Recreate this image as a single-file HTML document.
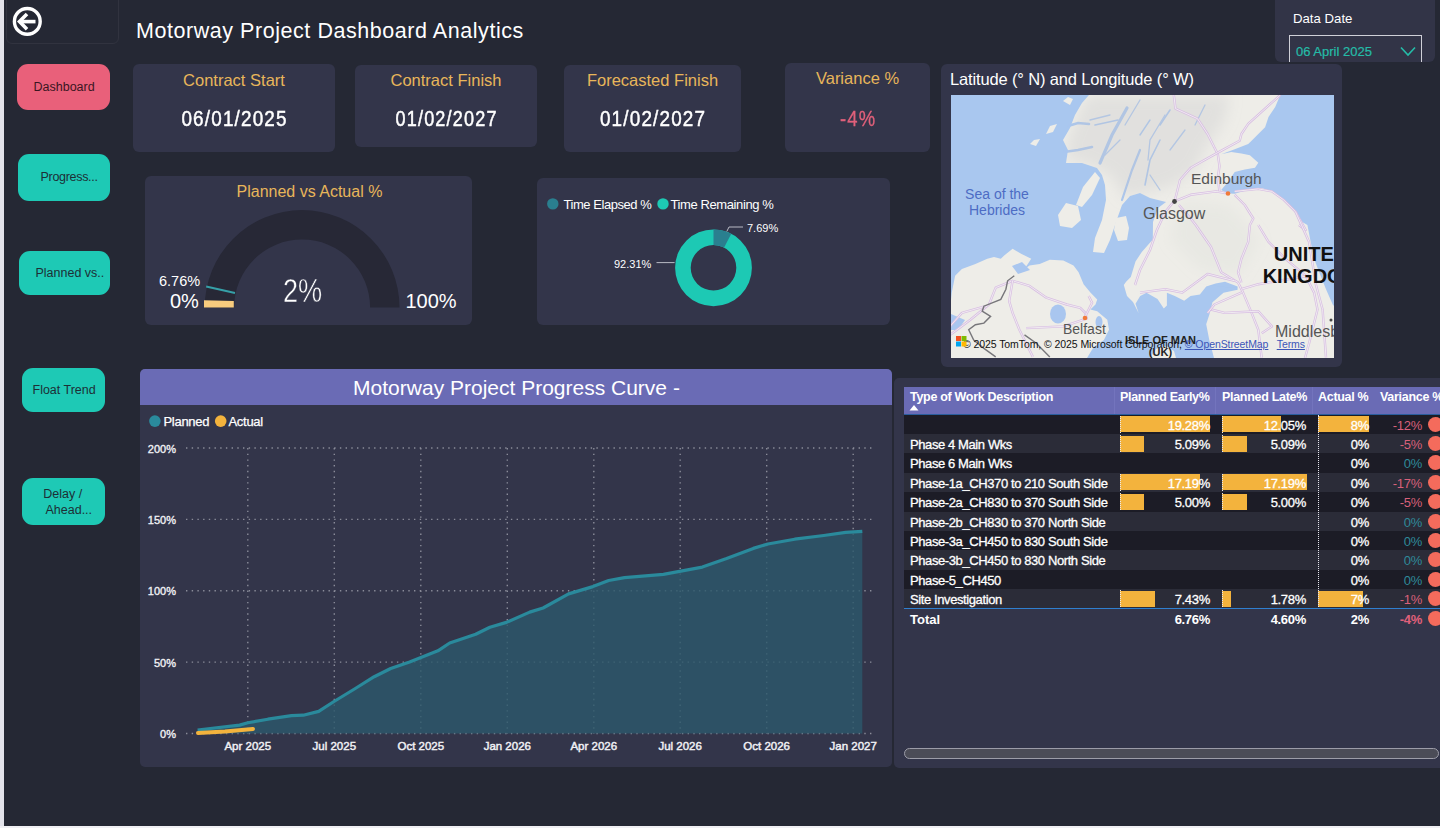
<!DOCTYPE html>
<html><head><meta charset="utf-8">
<style>
*{margin:0;padding:0;box-sizing:border-box}
html,body{width:1440px;height:828px;overflow:hidden;background:#e6e6ec;font-family:"Liberation Sans",sans-serif}
#page{position:absolute;left:0;top:0;width:1440px;height:828px;background:#252834;overflow:hidden}
#ls{position:absolute;left:0;top:0;width:4px;height:828px;background:#e3e3ea}
#bs{position:absolute;left:0;top:826px;width:1440px;height:2px;background:#f0f0f4}
.a{position:absolute}
.card{position:absolute;background:#33354a;border-radius:6px}
.t{position:absolute;white-space:nowrap;line-height:1}
.btn{position:absolute;border-radius:11px;color:#1d2b33;font-size:12.5px;display:flex;align-items:center;justify-content:center;text-align:center;line-height:16px}
.kt{color:#e8b65a;font-size:16.5px;text-align:center;left:0;right:0}
.kv{color:#fff;font-size:22.5px;letter-spacing:1.4px;text-indent:1.4px;text-align:center;left:0;right:0;transform:scaleX(.84);-webkit-text-stroke:0.5px #fff}
</style></head><body>
<div id="page">
<!-- back button box -->
<div class="a" style="left:6px;top:-8px;width:113px;height:52px;border:1px solid #31333f;border-radius:6px;background:#252834"></div>
<svg class="a" style="left:0;top:0" width="60" height="50">
<circle cx="27.3" cy="21.4" r="12.9" fill="none" stroke="#fff" stroke-width="3.4"/>
<path d="M19.5 21.6 H35.5" stroke="#fff" stroke-width="3.6" fill="none"/>
<path d="M27 14 L19.5 21.6 L27 29.2" fill="none" stroke="#fff" stroke-width="3.6" stroke-linejoin="miter"/>
</svg>
<div class="t" style="left:136px;top:21px;font-size:21.5px;letter-spacing:0.55px;color:#fff">Motorway Project Dashboard Analytics</div>

<!-- data date -->
<div class="card" style="left:1275px;top:-10px;width:160px;height:72px;background:#323447"></div>
<div class="t" style="left:1293px;top:12px;font-size:13.2px;color:#fff">Data Date</div>
<div class="a" style="left:1289px;top:35px;width:133px;height:27px;border:1.5px solid #d0d0d8;border-bottom:none"></div>
<div class="t" style="left:1296px;top:44.5px;font-size:13px;color:#25bca8;-webkit-text-stroke:0.2px #25bca8">06 April 2025</div>
<svg class="a" style="left:1400px;top:46px" width="17" height="11"><path d="M1 1.5 L8 9 L15 1.5" fill="none" stroke="#25bca8" stroke-width="1.6"/></svg>

<!-- nav buttons -->
<div class="btn" style="left:17px;top:64px;width:93px;height:46px;background:#e9607a"></div>
<div class="t" style="left:33.5px;top:80.7px;font-size:12.5px;color:#3a1622">Dashboard</div>
<div class="btn" style="left:18px;top:154px;width:92px;height:47px;background:#1ec9b5"></div>
<div class="t" style="left:40.5px;top:171.3px;font-size:12.5px;letter-spacing:-0.3px;color:#1d2f35">Progress...</div>
<div class="btn" style="left:19px;top:251px;width:91px;height:44px;background:#1ec9b5"></div>
<div class="t" style="left:35.5px;top:266.8px;font-size:12.5px;color:#1d2f35">Planned vs..</div>
<div class="btn" style="left:21.5px;top:368px;width:83px;height:44px;background:#1ec9b5"></div>
<div class="t" style="left:32.5px;top:384.2px;font-size:12.5px;color:#1d2f35">Float Trend</div>
<div class="btn" style="left:21.5px;top:478px;width:83px;height:47px;background:#1ec9b5"></div>
<div class="t" style="left:43.3px;top:487.6px;font-size:12.5px;color:#1d2f35">Delay /</div>
<div class="t" style="left:45.5px;top:503.7px;font-size:12.5px;color:#1d2f35">Ahead...</div>

<!-- KPI cards -->
<div class="card" style="left:133px;top:64px;width:202px;height:88px">
 <div class="t kt" style="top:8.2px">Contract Start</div>
 <div class="t kv" style="top:44.3px">06/01/2025</div>
</div>
<div class="card" style="left:355px;top:65px;width:182px;height:82px">
 <div class="t kt" style="top:6.9px">Contract Finish</div>
 <div class="t kv" style="top:43.7px;font-size:21.5px">01/02/2027</div>
</div>
<div class="card" style="left:564px;top:65px;width:177px;height:87px">
 <div class="t kt" style="top:7px">Forecasted Finish</div>
 <div class="t kv" style="top:43px">01/02/2027</div>
</div>
<div class="card" style="left:785px;top:63px;width:145px;height:89px">
 <div class="t kt" style="top:7px">Variance %</div>
 <div class="t kv" style="top:45px;color:#e0607a;font-size:22px;-webkit-text-stroke:0.3px #e0607a">-4%</div>
</div>

<!-- MAP -->
<div class="card" style="left:941px;top:64px;width:401px;height:303px;border-radius:6px"></div>
<div class="t" style="left:950px;top:71px;font-size:16.5px;letter-spacing:-0.15px;color:#fff">Latitude (° N) and Longitude (° W)</div>
<div id="map" class="a" style="left:951px;top:95px;width:383px;height:263px;background:#a9c7ef;overflow:hidden"><svg width="383" height="263" viewBox="951 95 383 263" style="position:absolute;left:0;top:0">
<defs><clipPath id="landclip"><path d="M1089.0,95.0 L1280.3,95.0 L1275.2,106.9 L1268.5,117.0 L1265.1,127.2 L1258.3,134.0 L1251.6,140.7 L1248.2,144.1 L1234.7,149.2 L1221.2,154.2 L1231.3,152.0 L1241.4,153.6 L1249.9,155.2 L1258.3,162.7 L1255.0,167.8 L1244.8,169.5 L1234.7,172.0 L1227.9,182.0 L1221.2,190.0 L1227.9,193.5 L1234.7,193.8 L1248.2,189.7 L1261.7,188.1 L1271.9,191.4 L1282.0,198.2 L1292.2,208.3 L1302.3,221.9 L1307.4,225.0 L1310.7,241.9 L1314.1,258.8 L1319.2,272.3 L1326.0,289.2 L1332.7,304.5 L1334.0,306.0 L1334.0,358.0 L1214.0,358.0 L1209.3,339.9 L1206.2,324.2 L1209.3,314.8 L1212.5,302.2 L1223.5,292.8 L1237.6,289.7 L1237.6,286.5 L1225.0,281.8 L1215.6,283.4 L1206.2,286.5 L1199.9,294.4 L1190.5,296.0 L1184.2,300.7 L1174.8,296.0 L1166.9,292.8 L1166.9,305.4 L1163.8,308.5 L1157.5,299.1 L1146.5,292.8 L1140.2,296.0 L1135.5,303.8 L1138.7,313.2 L1133.0,302.0 L1127.0,296.0 L1123.8,285.0 L1126.1,281.8 L1130.8,277.1 L1135.5,261.4 L1141.8,252.0 L1152.8,239.4 L1153.0,222.0 L1158.0,208.0 L1166.0,202.0 L1150.0,198.0 L1140.0,193.0 L1130.0,196.0 L1122.0,205.0 L1116.0,222.0 L1110.0,240.0 L1104.0,253.0 L1093.0,252.0 L1095.0,238.0 L1102.0,220.0 L1106.0,200.0 L1105.0,185.0 L1102.0,175.0 L1097.0,168.0 L1082.0,163.0 L1066.0,163.0 L1068.0,150.0 L1063.0,140.0 L1070.0,128.0 L1075.0,115.0 L1082.0,103.0 Z"/></clipPath></defs><path d="M1089.0,95.0 L1280.3,95.0 L1275.2,106.9 L1268.5,117.0 L1265.1,127.2 L1258.3,134.0 L1251.6,140.7 L1248.2,144.1 L1234.7,149.2 L1221.2,154.2 L1231.3,152.0 L1241.4,153.6 L1249.9,155.2 L1258.3,162.7 L1255.0,167.8 L1244.8,169.5 L1234.7,172.0 L1227.9,182.0 L1221.2,190.0 L1227.9,193.5 L1234.7,193.8 L1248.2,189.7 L1261.7,188.1 L1271.9,191.4 L1282.0,198.2 L1292.2,208.3 L1302.3,221.9 L1307.4,225.0 L1310.7,241.9 L1314.1,258.8 L1319.2,272.3 L1326.0,289.2 L1332.7,304.5 L1334.0,306.0 L1334.0,358.0 L1214.0,358.0 L1209.3,339.9 L1206.2,324.2 L1209.3,314.8 L1212.5,302.2 L1223.5,292.8 L1237.6,289.7 L1237.6,286.5 L1225.0,281.8 L1215.6,283.4 L1206.2,286.5 L1199.9,294.4 L1190.5,296.0 L1184.2,300.7 L1174.8,296.0 L1166.9,292.8 L1166.9,305.4 L1163.8,308.5 L1157.5,299.1 L1146.5,292.8 L1140.2,296.0 L1135.5,303.8 L1138.7,313.2 L1133.0,302.0 L1127.0,296.0 L1123.8,285.0 L1126.1,281.8 L1130.8,277.1 L1135.5,261.4 L1141.8,252.0 L1152.8,239.4 L1153.0,222.0 L1158.0,208.0 L1166.0,202.0 L1150.0,198.0 L1140.0,193.0 L1130.0,196.0 L1122.0,205.0 L1116.0,222.0 L1110.0,240.0 L1104.0,253.0 L1093.0,252.0 L1095.0,238.0 L1102.0,220.0 L1106.0,200.0 L1105.0,185.0 L1102.0,175.0 L1097.0,168.0 L1082.0,163.0 L1066.0,163.0 L1068.0,150.0 L1063.0,140.0 L1070.0,128.0 L1075.0,115.0 L1082.0,103.0 Z" fill="#eeede8"/>
<path d="M1083.0,187.0 L1095.0,172.0 L1100.0,178.0 L1092.0,195.0 L1082.0,207.0 L1076.0,205.0 Z" fill="#eeede8"/>
<path d="M1058.0,215.0 L1066.0,203.0 L1078.0,206.0 L1081.0,220.0 L1072.0,228.0 L1060.0,226.0 Z" fill="#eeede8"/>
<path d="M1116.0,218.0 L1126.0,216.0 L1129.0,228.0 L1127.0,240.0 L1118.0,241.0 L1114.0,230.0 Z" fill="#eeede8"/>
<path d="M951.0,300.0 L951.8,292.6 L955.1,275.7 L961.9,269.0 L975.4,263.9 L987.3,258.8 L994.0,257.1 L1000.8,258.8 L1004.2,255.4 L1012.6,248.7 L1021.1,253.7 L1031.2,258.8 L1027.8,263.9 L1024.5,269.0 L1029.5,265.6 L1039.7,263.9 L1049.8,259.7 L1063.3,260.5 L1073.5,265.6 L1078.6,272.3 L1083.6,284.2 L1090.4,292.6 L1097.2,299.4 L1095.5,304.5 L1090.4,309.5 L1097.2,311.2 L1107.3,319.7 L1109.0,329.8 L1103.9,340.0 L1093.8,346.7 L1087.0,358.0 L951.0,358.0 Z" fill="#eeede8"/>
<path d="M1150.0,358.0 L1156.0,349.0 L1166.0,346.0 L1174.0,351.0 L1176.0,358.0 Z" fill="#eeede8"/>
<path d="M1046.0,134.0 L1050.0,126.0 L1057.0,124.0 L1053.0,132.0 Z" fill="#eeede8"/>
<path d="M1030.0,144.0 L1034.0,140.0 L1040.0,139.0 L1036.0,146.0 Z" fill="#eeede8"/>
<path d="M1063.0,101.0 L1068.0,97.0 L1073.0,99.0 L1070.0,105.0 Z" fill="#eeede8"/>
<path d="M1127.0,108.0 L1112.0,135.0 L1100.0,163.0" stroke="#a9c6ef" stroke-width="3.2" fill="none" stroke-linecap="round"/>
<path d="M1140.0,150.0 L1132.0,170.0 L1122.0,200.0" stroke="#a9c6ef" stroke-width="2.2" fill="none" stroke-linecap="round"/>
<path d="M1160.0,140.0 L1150.0,160.0 L1145.0,185.0" stroke="#a9c6ef" stroke-width="1.6" fill="none" stroke-linecap="round"/>
<path d="M1092.0,147.0 L1078.0,150.0 L1064.0,152.0" stroke="#a9c6ef" stroke-width="2.6" fill="none" stroke-linecap="round"/>
<path d="M1089.0,124.0 L1078.0,123.0 L1068.0,126.0" stroke="#a9c6ef" stroke-width="2.6" fill="none" stroke-linecap="round"/>
<path d="M1118.0,120.0 L1095.0,125.0" stroke="#a9c6ef" stroke-width="1.6" fill="none" stroke-linecap="round"/>
<path d="M1170.0,110.0 L1160.0,125.0" stroke="#a9c6ef" stroke-width="1.6" fill="none" stroke-linecap="round"/>
<path d="M1150.0,120.0 L1140.0,135.0" stroke="#a9c6ef" stroke-width="1.4" fill="none" stroke-linecap="round"/>
<ellipse cx="1058" cy="314" rx="8" ry="9.5" fill="#a9c6ef"/>
<path d="M1012,266 L1022,262 L1030,270 L1018,274 Z" fill="#a9c6ef"/>
<ellipse cx="1099" cy="322" rx="3.5" ry="6" fill="#a9c6ef"/>
<path d="M951,314 L965,320 L958,330 L951,330 Z" fill="#a9c6ef"/>
<defs><filter id="bl" x="-20%" y="-20%" width="140%" height="140%"><feGaussianBlur stdDeviation="7"/></filter></defs><g clip-path="url(#landclip)"><path d="M1089.0,95.0 L1230.0,95.0 L1225.0,120.0 L1205.0,150.0 L1195.0,170.0 L1175.0,185.0 L1150.0,192.0 L1125.0,198.0 L1110.0,175.0 L1085.0,163.0 L1066.0,160.0 L1068.0,140.0 L1080.0,110.0 Z" fill="#c4c5c6" fill-opacity=".3" filter="url(#bl)"/></g>
<path d="M1180.0,200.0 L1230.0,205.0 L1260.0,240.0 L1240.0,275.0 L1200.0,270.0 L1170.0,240.0 Z" fill="#cfd0cf" fill-opacity=".18" filter="url(#bl)"/>
<path d="M1140.0,100.0 L1125.0,125.0" stroke="#b4c6e2" stroke-width="1.3" fill="none" stroke-linecap="round"/>
<path d="M1165.0,115.0 L1150.0,140.0 L1148.0,160.0" stroke="#b4c6e2" stroke-width="1.3" fill="none" stroke-linecap="round"/>
<path d="M1185.0,130.0 L1170.0,150.0" stroke="#b4c6e2" stroke-width="1.3" fill="none" stroke-linecap="round"/>
<path d="M1105.0,155.0 L1120.0,140.0" stroke="#b4c6e2" stroke-width="1.3" fill="none" stroke-linecap="round"/>
<path d="M1150.0,175.0 L1160.0,190.0" stroke="#b4c6e2" stroke-width="1.3" fill="none" stroke-linecap="round"/>
<path d="M1090.0,120.0 L1110.0,115.0" stroke="#b4c6e2" stroke-width="1.3" fill="none" stroke-linecap="round"/>
<path d="M1205.0,105.0 L1195.0,125.0" stroke="#b4c6e2" stroke-width="1.3" fill="none" stroke-linecap="round"/>
<path d="M1173.8,95.0 L1175.5,108.6 L1197.5,118.7 L1207.6,134.0 L1214.4,147.5 L1217.8,154.2 L1219.5,166.1 L1217.8,177.9 L1219.5,191.4" stroke="#d8bfe2" stroke-width="2.4" fill="none" stroke-linejoin="round"/>
<path d="M1173.8,95.0 L1175.5,108.6 L1197.5,118.7 L1207.6,134.0 L1214.4,147.5 L1217.8,154.2 L1219.5,166.1 L1217.8,177.9 L1219.5,191.4" stroke="#f3eef3" stroke-width="0.9" fill="none" stroke-linejoin="round"/>
<path d="M1280.3,95.0 L1248.2,123.8 L1241.4,134.0 L1239.7,140.7 L1217.8,152.6 L1190.7,167.8 L1180.0,180.0 L1175.0,200.0" stroke="#d8bfe2" stroke-width="2.4" fill="none" stroke-linejoin="round"/>
<path d="M1280.3,95.0 L1248.2,123.8 L1241.4,134.0 L1239.7,140.7 L1217.8,152.6 L1190.7,167.8 L1180.0,180.0 L1175.0,200.0" stroke="#f3eef3" stroke-width="0.9" fill="none" stroke-linejoin="round"/>
<path d="M1173.8,201.6 L1190.7,194.8 L1216.1,191.4 L1227.9,193.5" stroke="#d8bfe2" stroke-width="2.4" fill="none" stroke-linejoin="round"/>
<path d="M1173.8,201.6 L1190.7,194.8 L1216.1,191.4 L1227.9,193.5" stroke="#f3eef3" stroke-width="0.9" fill="none" stroke-linejoin="round"/>
<path d="M1234.7,191.4 L1258.3,188.9 L1271.9,191.4 L1283.7,199.9 L1295.5,211.7 L1305.7,230.0 L1298.9,225.0" stroke="#d8bfe2" stroke-width="2.4" fill="none" stroke-linejoin="round"/>
<path d="M1234.7,191.4 L1258.3,188.9 L1271.9,191.4 L1283.7,199.9 L1295.5,211.7 L1305.7,230.0 L1298.9,225.0" stroke="#f3eef3" stroke-width="0.9" fill="none" stroke-linejoin="round"/>
<path d="M1258.3,225.0 L1268.5,241.9 L1285.4,258.8 L1305.7,275.7 L1314.1,292.6 L1317.5,309.5 L1309.1,343.3 L1305.0,358.0" stroke="#d8bfe2" stroke-width="2.4" fill="none" stroke-linejoin="round"/>
<path d="M1258.3,225.0 L1268.5,241.9 L1285.4,258.8 L1305.7,275.7 L1314.1,292.6 L1317.5,309.5 L1309.1,343.3 L1305.0,358.0" stroke="#f3eef3" stroke-width="0.9" fill="none" stroke-linejoin="round"/>
<path d="M1295.5,211.7 L1309.1,241.9 L1315.8,284.2 L1322.6,309.5 L1326.0,357.7" stroke="#d8bfe2" stroke-width="2.4" fill="none" stroke-linejoin="round"/>
<path d="M1295.5,211.7 L1309.1,241.9 L1315.8,284.2 L1322.6,309.5 L1326.0,357.7" stroke="#f3eef3" stroke-width="0.9" fill="none" stroke-linejoin="round"/>
<path d="M1234.7,194.8 L1244.8,205.0 L1253.3,218.5 L1249.9,225.0 L1248.2,241.9 L1241.4,258.8 L1238.1,272.3 L1241.4,282.5" stroke="#d8bfe2" stroke-width="2.4" fill="none" stroke-linejoin="round"/>
<path d="M1234.7,194.8 L1244.8,205.0 L1253.3,218.5 L1249.9,225.0 L1248.2,241.9 L1241.4,258.8 L1238.1,272.3 L1241.4,282.5" stroke="#f3eef3" stroke-width="0.9" fill="none" stroke-linejoin="round"/>
<path d="M1178.9,205.0 L1190.7,218.5 L1195.8,225.0 L1211.0,247.0 L1221.2,272.3 L1238.1,282.5 L1243.1,292.6 L1251.6,312.9 L1258.3,329.8 L1261.7,357.7" stroke="#d8bfe2" stroke-width="2.4" fill="none" stroke-linejoin="round"/>
<path d="M1178.9,205.0 L1190.7,218.5 L1195.8,225.0 L1211.0,247.0 L1221.2,272.3 L1238.1,282.5 L1243.1,292.6 L1251.6,312.9 L1258.3,329.8 L1261.7,357.7" stroke="#f3eef3" stroke-width="0.9" fill="none" stroke-linejoin="round"/>
<path d="M1173.8,201.6 L1165.4,211.7 L1156.9,230.0 L1150.0,250.0 L1140.0,270.0 L1135.0,285.0" stroke="#d8bfe2" stroke-width="2.4" fill="none" stroke-linejoin="round"/>
<path d="M1173.8,201.6 L1165.4,211.7 L1156.9,230.0 L1150.0,250.0 L1140.0,270.0 L1135.0,285.0" stroke="#f3eef3" stroke-width="0.9" fill="none" stroke-linejoin="round"/>
<path d="M1140.0,292.6 L1165.4,289.2 L1182.3,292.6 L1207.6,274.0 L1234.7,280.8" stroke="#d8bfe2" stroke-width="2.4" fill="none" stroke-linejoin="round"/>
<path d="M1140.0,292.6 L1165.4,289.2 L1182.3,292.6 L1207.6,274.0 L1234.7,280.8" stroke="#f3eef3" stroke-width="0.9" fill="none" stroke-linejoin="round"/>
<path d="M1241.4,289.2 L1258.3,284.2 L1309.1,275.7" stroke="#d8bfe2" stroke-width="2.4" fill="none" stroke-linejoin="round"/>
<path d="M1241.4,289.2 L1258.3,284.2 L1309.1,275.7" stroke="#f3eef3" stroke-width="0.9" fill="none" stroke-linejoin="round"/>
<path d="M1211.0,309.5 L1224.5,312.9 L1258.3,311.2 L1271.9,326.4 L1261.7,333.2" stroke="#d8bfe2" stroke-width="2.4" fill="none" stroke-linejoin="round"/>
<path d="M1211.0,309.5 L1224.5,312.9 L1258.3,311.2 L1271.9,326.4 L1261.7,333.2" stroke="#f3eef3" stroke-width="0.9" fill="none" stroke-linejoin="round"/>
<path d="M1207.6,312.9 L1214.4,304.5 L1241.4,292.6" stroke="#d8bfe2" stroke-width="2.4" fill="none" stroke-linejoin="round"/>
<path d="M1207.6,312.9 L1214.4,304.5 L1241.4,292.6" stroke="#f3eef3" stroke-width="0.9" fill="none" stroke-linejoin="round"/>
<path d="M950.0,335.0 L970.4,319.7 L989.0,304.5 L995.7,287.6 L1012.6,280.8 L1029.5,285.9 L1046.4,297.7 L1066.7,304.5 L1080.3,307.8 L1085.3,312.9 L1087.0,319.7" stroke="#d8bfe2" stroke-width="2.4" fill="none" stroke-linejoin="round"/>
<path d="M950.0,335.0 L970.4,319.7 L989.0,304.5 L995.7,287.6 L1012.6,280.8 L1029.5,285.9 L1046.4,297.7 L1066.7,304.5 L1080.3,307.8 L1085.3,312.9 L1087.0,319.7" stroke="#f3eef3" stroke-width="0.9" fill="none" stroke-linejoin="round"/>
<path d="M1012.6,280.8 L1009.2,301.1 L1012.6,312.9 L1019.4,329.8 L1032.9,356.9" stroke="#d8bfe2" stroke-width="2.4" fill="none" stroke-linejoin="round"/>
<path d="M1012.6,280.8 L1009.2,301.1 L1012.6,312.9 L1019.4,329.8 L1032.9,356.9" stroke="#f3eef3" stroke-width="0.9" fill="none" stroke-linejoin="round"/>
<path d="M1026.1,328.1 L1063.3,326.4 L1083.6,319.7 L1092.1,302.8 L1088.7,296.0" stroke="#d8bfe2" stroke-width="2.4" fill="none" stroke-linejoin="round"/>
<path d="M1026.1,328.1 L1063.3,326.4 L1083.6,319.7 L1092.1,302.8 L1088.7,296.0" stroke="#f3eef3" stroke-width="0.9" fill="none" stroke-linejoin="round"/>
<path d="M985.6,306.2 L961.9,312.9 L950.0,326.4" stroke="#d8bfe2" stroke-width="2.4" fill="none" stroke-linejoin="round"/>
<path d="M985.6,306.2 L961.9,312.9 L950.0,326.4" stroke="#f3eef3" stroke-width="0.9" fill="none" stroke-linejoin="round"/>
<path d="M1014.3,275.7 L1007.6,280.8 L1005.9,289.2 L1000.8,299.4 L983.9,306.2 L982.2,311.2 L990.6,316.3 L983.9,323.1 L975.4,324.7 L968.7,329.8 L973.7,340.0 L983.9,348.4 L995.7,356.9" stroke="#77767a" stroke-width="1.4" fill="none"/>
<path d="M1024.5,334.9 L1036.3,343.3 L1049.8,356.9" stroke="#77767a" stroke-width="1.4" fill="none"/>
<circle cx="1174.5" cy="201.5" r="2.4" fill="#444"/><circle cx="1228" cy="193.5" r="2.3" fill="#f07a3a"/><circle cx="1085" cy="318" r="2.3" fill="#f07a3a"/><circle cx="1331" cy="320" r="1.5" fill="#444"/>
</svg>
</div>
<div class="a" style="left:951px;top:95px;width:383px;height:263px;overflow:hidden"><div class="t" style="left:11px;top:91px;font-size:14px;color:#4d6cc4;width:70px;text-align:center;line-height:16px;white-space:normal">Sea of the Hebrides</div>
<div class="t" style="left:240px;top:75.5px;font-size:15.5px;color:#555">Edinburgh</div>
<div class="t" style="left:192px;top:111px;font-size:16px;color:#555">Glasgow</div>
<div class="t" style="left:112px;top:227px;font-size:14px;color:#555">Belfast</div>
<div class="t" style="left:260px;width:200px;top:149px;font-size:20px;color:#111;font-weight:bold;line-height:21.5px;text-align:center">UNITED<br>KINGDOM</div>
<div class="t" style="left:324px;top:229px;font-size:16px;color:#555">Middlesbrough</div>
<div class="t" style="left:174px;top:239px;font-size:11px;color:#222;font-weight:bold;line-height:12px;text-align:center">ISLE OF MAN<br>(UK)</div>
<div class="t" style="left:12px;top:244px;font-size:10.5px;letter-spacing:-0.08px;color:#111">© 2025 TomTom, © 2025 Microsoft Corporation, <span style="color:#3b55b8;text-decoration:underline">© OpenStreetMap</span>&nbsp;&nbsp; <span style="color:#3b55b8;text-decoration:underline">Terms</span></div>
<svg class="a" style="left:5px;top:241px" width="11" height="11"><rect x="0" y="0" width="5" height="5" fill="#f25022"/><rect x="5.5" y="0" width="5" height="5" fill="#7fba00"/><rect x="0" y="5.5" width="5" height="5" fill="#00a4ef"/><rect x="5.5" y="5.5" width="5" height="5" fill="#ffb900"/></svg>
</div>

<!-- gauge card -->
<div class="card" style="left:145px;top:176px;width:327px;height:149px"></div>
<div class="t" style="left:236.5px;top:184px;font-size:16px;color:#e8b65a">Planned vs Actual %</div>
<svg class="a" style="left:0;top:0" width="1440" height="828">
<path d="M204.7 307.5 A97.4 97.4 0 0 1 399.5 307.5 L370.1 307.5 A68 68 0 0 0 234.1 307.5 Z" fill="#272836"/>
<path d="M204 307.6 L204 300.3 L233.8 301 L233.8 307.6 Z" fill="#f8cc7e"/>
<line x1="206.2" y1="286.6" x2="235" y2="293" stroke="#36a0a8" stroke-width="2"/>
</svg>
<div class="t" style="left:159px;top:273.5px;font-size:14.5px;color:#fff">6.76%</div>
<div class="t" style="left:170px;top:291px;font-size:20px;color:#fff">0%</div>
<div class="t" style="left:405.5px;top:291px;font-size:20px;color:#fff">100%</div>
<div class="t" style="left:282.5px;top:273.5px;font-size:33.5px;color:#fff;transform:scaleX(.81);transform-origin:left;-webkit-text-stroke:0.5px #33354a">2%</div>
<!-- donut card -->
<div class="card" style="left:537px;top:178px;width:353px;height:147px"></div>
<svg class="a" style="left:0;top:0" width="1440" height="828">
<circle cx="552.8" cy="203.9" r="5.7" fill="#2a7f8f"/>
<circle cx="663" cy="203.9" r="5.7" fill="#1dc9b4"/>
<path d="M713.5 229.4 A38.4 38.4 0 1 1 713.5 306.2 A38.4 38.4 0 1 1 713.5 229.4 Z M713.5 245 A22.8 22.8 0 1 0 713.5 290.6 A22.8 22.8 0 1 0 713.5 245 Z" fill="#1dc9b4" fill-rule="evenodd"/>
<path d="M713.5 229.4 A38.4 38.4 0 0 1 731.3 233.8 L724.1 247.6 A22.8 22.8 0 0 0 713.5 245 Z" fill="#2a7f8f"/>
<polyline points="726.8,231.5 729,227 743,227" fill="none" stroke="#b9bac4" stroke-width="1"/>
<line x1="656.5" y1="262.6" x2="674.6" y2="262.6" stroke="#b9bac4" stroke-width="1"/>
</svg>
<div class="t" style="left:563.5px;top:197.5px;font-size:13px;letter-spacing:-0.45px;color:#fff">Time Elapsed %</div>
<div class="t" style="left:670.5px;top:197.5px;font-size:13px;letter-spacing:-0.4px;color:#fff">Time Remaining %</div>
<div class="t" style="left:747px;top:223px;font-size:11px;color:#fff">7.69%</div>
<div class="t" style="left:614px;top:258.5px;font-size:11px;color:#fff">92.31%</div>

<!-- chart card -->
<div class="card" style="left:139.5px;top:369px;width:752.3px;height:398px;border-radius:5px"></div>
<div class="a" style="left:139.5px;top:369px;width:752.3px;height:35.5px;background:#6a6bb5;border-radius:5px 5px 0 0"></div>
<div class="t" style="left:140px;width:753px;top:376.5px;font-size:21px;color:#fff;text-align:center">Motorway Project Progress Curve -</div>
<svg class="a" style="left:0;top:0" width="1440" height="828">
<circle cx="154.9" cy="421.1" r="5.8" fill="#2a8a9c"/>
<circle cx="220.7" cy="421.1" r="5.8" fill="#f3b33d"/>
<line x1="186" y1="448.0" x2="874" y2="448.0" stroke="#8a8c99" stroke-width="1.4" stroke-dasharray="1.4,4.3"/>
<line x1="186" y1="519.4" x2="874" y2="519.4" stroke="#8a8c99" stroke-width="1.4" stroke-dasharray="1.4,4.3"/>
<line x1="186" y1="590.8" x2="874" y2="590.8" stroke="#8a8c99" stroke-width="1.4" stroke-dasharray="1.4,4.3"/>
<line x1="186" y1="662.1" x2="874" y2="662.1" stroke="#8a8c99" stroke-width="1.4" stroke-dasharray="1.4,4.3"/>
<line x1="186" y1="733.5" x2="874" y2="733.5" stroke="#8a8c99" stroke-width="1.4" stroke-dasharray="1.4,4.3"/>
<line x1="247.8" y1="448" x2="247.8" y2="733.5" stroke="#8a8c99" stroke-width="1.4" stroke-dasharray="1.4,4.3"/>
<line x1="334.3" y1="448" x2="334.3" y2="733.5" stroke="#8a8c99" stroke-width="1.4" stroke-dasharray="1.4,4.3"/>
<line x1="420.8" y1="448" x2="420.8" y2="733.5" stroke="#8a8c99" stroke-width="1.4" stroke-dasharray="1.4,4.3"/>
<line x1="507.3" y1="448" x2="507.3" y2="733.5" stroke="#8a8c99" stroke-width="1.4" stroke-dasharray="1.4,4.3"/>
<line x1="593.8" y1="448" x2="593.8" y2="733.5" stroke="#8a8c99" stroke-width="1.4" stroke-dasharray="1.4,4.3"/>
<line x1="680.2" y1="448" x2="680.2" y2="733.5" stroke="#8a8c99" stroke-width="1.4" stroke-dasharray="1.4,4.3"/>
<line x1="766.7" y1="448" x2="766.7" y2="733.5" stroke="#8a8c99" stroke-width="1.4" stroke-dasharray="1.4,4.3"/>
<line x1="853.2" y1="448" x2="853.2" y2="733.5" stroke="#8a8c99" stroke-width="1.4" stroke-dasharray="1.4,4.3"/>
<path d="M197.6,733.5 L197.6,730.0 L239.6,725.1 L247.9,722.8 L267.9,719.2 L291.5,715.7 L303.3,715.2 L318.7,711.4 L334.0,701.5 L355.3,688.5 L374.2,676.7 L390.7,668.5 L409.6,661.9 L437.9,650.8 L449.7,643.0 L475.7,634.2 L489.9,627.2 L506.4,622.4 L529.7,612.1 L543.1,608.0 L568.6,593.9 L592.9,586.6 L608.7,580.5 L624.5,577.6 L663.4,574.4 L702.3,567.1 L726.6,558.6 L753.3,548.4 L767.9,544.0 L794.7,539.2 L823.8,535.5 L845.7,532.4 L862.3,531.4 L862.3,733.5 Z" fill="#2c596c" fill-opacity=".8"/>
<polyline points="197.6,730.0 239.6,725.1 247.9,722.8 267.9,719.2 291.5,715.7 303.3,715.2 318.7,711.4 334.0,701.5 355.3,688.5 374.2,676.7 390.7,668.5 409.6,661.9 437.9,650.8 449.7,643.0 475.7,634.2 489.9,627.2 506.4,622.4 529.7,612.1 543.1,608.0 568.6,593.9 592.9,586.6 608.7,580.5 624.5,577.6 663.4,574.4 702.3,567.1 726.6,558.6 753.3,548.4 767.9,544.0 794.7,539.2 823.8,535.5 845.7,532.4 862.3,531.4" fill="none" stroke="#2a8a9c" stroke-width="3.2" stroke-linejoin="round"/>
<polyline points="198,733 225,731.5 253,729" fill="none" stroke="#f3b33d" stroke-width="4" stroke-linecap="round"/>
</svg>
<div class="t" style="left:163.5px;top:414.5px;font-size:13px;letter-spacing:-0.3px;color:#fff;-webkit-text-stroke:0.25px #fff">Planned</div>
<div class="t" style="left:228.5px;top:414.5px;font-size:13px;letter-spacing:-0.3px;color:#fff;-webkit-text-stroke:0.25px #fff">Actual</div>
<div class="t" style="left:100px;width:76px;text-align:right;top:443.5px;font-size:11px;color:#f0f0f4;-webkit-text-stroke:0.35px #f0f0f4">200%</div>
<div class="t" style="left:100px;width:76px;text-align:right;top:514.9px;font-size:11px;color:#f0f0f4;-webkit-text-stroke:0.35px #f0f0f4">150%</div>
<div class="t" style="left:100px;width:76px;text-align:right;top:586.3px;font-size:11px;color:#f0f0f4;-webkit-text-stroke:0.35px #f0f0f4">100%</div>
<div class="t" style="left:100px;width:76px;text-align:right;top:657.6px;font-size:11px;color:#f0f0f4;-webkit-text-stroke:0.35px #f0f0f4">50%</div>
<div class="t" style="left:100px;width:76px;text-align:right;top:729.0px;font-size:11px;color:#f0f0f4;-webkit-text-stroke:0.35px #f0f0f4">0%</div>
<div class="t" style="left:207.8px;width:80px;text-align:center;top:741px;font-size:11.5px;color:#f0f0f4;-webkit-text-stroke:0.45px #f0f0f4">Apr 2025</div>
<div class="t" style="left:294.3px;width:80px;text-align:center;top:741px;font-size:11.5px;color:#f0f0f4;-webkit-text-stroke:0.45px #f0f0f4">Jul 2025</div>
<div class="t" style="left:380.8px;width:80px;text-align:center;top:741px;font-size:11.5px;color:#f0f0f4;-webkit-text-stroke:0.45px #f0f0f4">Oct 2025</div>
<div class="t" style="left:467.3px;width:80px;text-align:center;top:741px;font-size:11.5px;color:#f0f0f4;-webkit-text-stroke:0.45px #f0f0f4">Jan 2026</div>
<div class="t" style="left:553.8px;width:80px;text-align:center;top:741px;font-size:11.5px;color:#f0f0f4;-webkit-text-stroke:0.45px #f0f0f4">Apr 2026</div>
<div class="t" style="left:640.2px;width:80px;text-align:center;top:741px;font-size:11.5px;color:#f0f0f4;-webkit-text-stroke:0.45px #f0f0f4">Jul 2026</div>
<div class="t" style="left:726.7px;width:80px;text-align:center;top:741px;font-size:11.5px;color:#f0f0f4;-webkit-text-stroke:0.45px #f0f0f4">Oct 2026</div>
<div class="t" style="left:813.2px;width:80px;text-align:center;top:741px;font-size:11.5px;color:#f0f0f4;-webkit-text-stroke:0.45px #f0f0f4">Jan 2027</div>

<!-- table card -->
<div class="card" style="left:894px;top:378px;width:560px;height:390px;border-radius:5px"></div>
<div class="a" style="left:904px;top:387px;width:536px;height:27.5px;background:#6a6bb5"></div>
<div class="a" style="left:1114px;top:387px;width:1px;height:27.5px;background:#7374bd"></div>
<div class="a" style="left:1215px;top:387px;width:1px;height:27.5px;background:#7374bd"></div>
<div class="a" style="left:1312px;top:387px;width:1px;height:27.5px;background:#7374bd"></div>
<div class="a" style="left:904px;top:414px;width:536px;height:1px;background:#2a5d9c"></div>
<div class="t" style="left:910px;top:391px;font-size:12.5px;letter-spacing:-0.3px;color:#fff;font-weight:bold">Type of Work Description</div>
<svg class="a" style="left:909px;top:404px" width="12" height="7"><path d="M0.5 6.5 L5 1 L9.5 6.5 Z" fill="#fff"/></svg>
<div class="t" style="left:1120px;top:391px;font-size:12.5px;letter-spacing:-0.3px;color:#fff;font-weight:bold">Planned Early%</div>
<div class="t" style="left:1222px;top:391px;font-size:12.5px;letter-spacing:-0.3px;color:#fff;font-weight:bold">Planned Late%</div>
<div class="t" style="left:1318px;top:391px;font-size:12.5px;letter-spacing:-0.3px;color:#fff;font-weight:bold">Actual %</div>
<div class="t" style="left:1380px;top:391px;font-size:12.5px;letter-spacing:-0.3px;color:#fff;font-weight:bold">Variance %</div>
<div class="a" style="left:904px;top:414.5px;width:536px;height:19.6px;background:#1c1c26"></div>
<div class="a" style="left:1120.4px;top:416.1px;width:89.6px;height:16px;background:#f3b33d"></div>
<div class="a" style="left:1120.4px;top:415.5px;width:0;height:17px;border-left:1px dotted #e8e8f0"></div>
<div class="t" style="left:1110.0px;width:100px;text-align:right;top:418.5px;font-size:13px;letter-spacing:-0.3px;color:#fff;-webkit-text-stroke:0.3px #fff">19.28%</div>
<div class="a" style="left:1221.8px;top:416.1px;width:59.7px;height:16px;background:#f3b33d"></div>
<div class="a" style="left:1221.8px;top:415.5px;width:0;height:17px;border-left:1px dotted #e8e8f0"></div>
<div class="t" style="left:1206.0px;width:100px;text-align:right;top:418.5px;font-size:13px;letter-spacing:-0.3px;color:#fff;-webkit-text-stroke:0.3px #fff">12.05%</div>
<div class="a" style="left:1318.3px;top:416.1px;width:50.8px;height:16px;background:#f3b33d"></div>
<div class="t" style="left:1269.0px;width:100px;text-align:right;top:418.5px;font-size:13px;letter-spacing:-0.3px;color:#fff;-webkit-text-stroke:0.3px #fff">8%</div>
<div class="t" style="left:1322px;width:100px;text-align:right;top:418.5px;font-size:13px;letter-spacing:-0.3px;color:#d9607a">-12%</div>
<div class="a" style="left:1427.5px;top:416.5px;width:15px;height:15px;border-radius:50%;background:#f46b5c"></div>
<div class="a" style="left:904px;top:433.9px;width:536px;height:19.6px;background:#2b2c38"></div>
<div class="t" style="left:910px;top:437.9px;font-size:13px;letter-spacing:-0.4px;color:#fff;-webkit-text-stroke:0.3px #fff">Phase 4 Main Wks</div>
<div class="a" style="left:1120.4px;top:435.5px;width:23.7px;height:16px;background:#f3b33d"></div>
<div class="a" style="left:1120.4px;top:434.9px;width:0;height:17px;border-left:1px dotted #e8e8f0"></div>
<div class="t" style="left:1110.0px;width:100px;text-align:right;top:437.9px;font-size:13px;letter-spacing:-0.3px;color:#fff;-webkit-text-stroke:0.3px #fff">5.09%</div>
<div class="a" style="left:1221.8px;top:435.5px;width:25.2px;height:16px;background:#f3b33d"></div>
<div class="a" style="left:1221.8px;top:434.9px;width:0;height:17px;border-left:1px dotted #e8e8f0"></div>
<div class="t" style="left:1206.0px;width:100px;text-align:right;top:437.9px;font-size:13px;letter-spacing:-0.3px;color:#fff;-webkit-text-stroke:0.3px #fff">5.09%</div>
<div class="t" style="left:1269.0px;width:100px;text-align:right;top:437.9px;font-size:13px;letter-spacing:-0.3px;color:#fff;-webkit-text-stroke:0.3px #fff">0%</div>
<div class="t" style="left:1322px;width:100px;text-align:right;top:437.9px;font-size:13px;letter-spacing:-0.3px;color:#d9607a">-5%</div>
<div class="a" style="left:1427.5px;top:435.9px;width:15px;height:15px;border-radius:50%;background:#f46b5c"></div>
<div class="a" style="left:904px;top:453.3px;width:536px;height:19.6px;background:#1c1c26"></div>
<div class="t" style="left:910px;top:457.3px;font-size:13px;letter-spacing:-0.4px;color:#fff;-webkit-text-stroke:0.3px #fff">Phase 6 Main Wks</div>
<div class="t" style="left:1269.0px;width:100px;text-align:right;top:457.3px;font-size:13px;letter-spacing:-0.3px;color:#fff;-webkit-text-stroke:0.3px #fff">0%</div>
<div class="t" style="left:1322px;width:100px;text-align:right;top:457.3px;font-size:13px;letter-spacing:-0.3px;color:#2f8a9a">0%</div>
<div class="a" style="left:1427.5px;top:455.3px;width:15px;height:15px;border-radius:50%;background:#f46b5c"></div>
<div class="a" style="left:904px;top:472.7px;width:536px;height:19.6px;background:#2b2c38"></div>
<div class="t" style="left:910px;top:476.7px;font-size:13px;letter-spacing:-0.4px;color:#fff;-webkit-text-stroke:0.3px #fff">Phase-1a_CH370 to 210 South Side</div>
<div class="a" style="left:1120.4px;top:474.3px;width:79.9px;height:16px;background:#f3b33d"></div>
<div class="a" style="left:1120.4px;top:473.7px;width:0;height:17px;border-left:1px dotted #e8e8f0"></div>
<div class="t" style="left:1110.0px;width:100px;text-align:right;top:476.7px;font-size:13px;letter-spacing:-0.3px;color:#fff;-webkit-text-stroke:0.3px #fff">17.19%</div>
<div class="a" style="left:1221.8px;top:474.3px;width:85.2px;height:16px;background:#f3b33d"></div>
<div class="a" style="left:1221.8px;top:473.7px;width:0;height:17px;border-left:1px dotted #e8e8f0"></div>
<div class="t" style="left:1206.0px;width:100px;text-align:right;top:476.7px;font-size:13px;letter-spacing:-0.3px;color:#fff;-webkit-text-stroke:0.3px #fff">17.19%</div>
<div class="t" style="left:1269.0px;width:100px;text-align:right;top:476.7px;font-size:13px;letter-spacing:-0.3px;color:#fff;-webkit-text-stroke:0.3px #fff">0%</div>
<div class="t" style="left:1322px;width:100px;text-align:right;top:476.7px;font-size:13px;letter-spacing:-0.3px;color:#d9607a">-17%</div>
<div class="a" style="left:1427.5px;top:474.7px;width:15px;height:15px;border-radius:50%;background:#f46b5c"></div>
<div class="a" style="left:904px;top:492.1px;width:536px;height:19.6px;background:#1c1c26"></div>
<div class="t" style="left:910px;top:496.1px;font-size:13px;letter-spacing:-0.4px;color:#fff;-webkit-text-stroke:0.3px #fff">Phase-2a_CH830 to 370 South Side</div>
<div class="a" style="left:1120.4px;top:493.7px;width:23.2px;height:16px;background:#f3b33d"></div>
<div class="a" style="left:1120.4px;top:493.1px;width:0;height:17px;border-left:1px dotted #e8e8f0"></div>
<div class="t" style="left:1110.0px;width:100px;text-align:right;top:496.1px;font-size:13px;letter-spacing:-0.3px;color:#fff;-webkit-text-stroke:0.3px #fff">5.00%</div>
<div class="a" style="left:1221.8px;top:493.7px;width:24.8px;height:16px;background:#f3b33d"></div>
<div class="a" style="left:1221.8px;top:493.1px;width:0;height:17px;border-left:1px dotted #e8e8f0"></div>
<div class="t" style="left:1206.0px;width:100px;text-align:right;top:496.1px;font-size:13px;letter-spacing:-0.3px;color:#fff;-webkit-text-stroke:0.3px #fff">5.00%</div>
<div class="t" style="left:1269.0px;width:100px;text-align:right;top:496.1px;font-size:13px;letter-spacing:-0.3px;color:#fff;-webkit-text-stroke:0.3px #fff">0%</div>
<div class="t" style="left:1322px;width:100px;text-align:right;top:496.1px;font-size:13px;letter-spacing:-0.3px;color:#d9607a">-5%</div>
<div class="a" style="left:1427.5px;top:494.1px;width:15px;height:15px;border-radius:50%;background:#f46b5c"></div>
<div class="a" style="left:904px;top:511.5px;width:536px;height:19.6px;background:#2b2c38"></div>
<div class="t" style="left:910px;top:515.5px;font-size:13px;letter-spacing:-0.4px;color:#fff;-webkit-text-stroke:0.3px #fff">Phase-2b_CH830 to 370 North Side</div>
<div class="t" style="left:1269.0px;width:100px;text-align:right;top:515.5px;font-size:13px;letter-spacing:-0.3px;color:#fff;-webkit-text-stroke:0.3px #fff">0%</div>
<div class="t" style="left:1322px;width:100px;text-align:right;top:515.5px;font-size:13px;letter-spacing:-0.3px;color:#2f8a9a">0%</div>
<div class="a" style="left:1427.5px;top:513.5px;width:15px;height:15px;border-radius:50%;background:#f46b5c"></div>
<div class="a" style="left:904px;top:530.9px;width:536px;height:19.6px;background:#1c1c26"></div>
<div class="t" style="left:910px;top:534.9px;font-size:13px;letter-spacing:-0.4px;color:#fff;-webkit-text-stroke:0.3px #fff">Phase-3a_CH450 to 830 South Side</div>
<div class="t" style="left:1269.0px;width:100px;text-align:right;top:534.9px;font-size:13px;letter-spacing:-0.3px;color:#fff;-webkit-text-stroke:0.3px #fff">0%</div>
<div class="t" style="left:1322px;width:100px;text-align:right;top:534.9px;font-size:13px;letter-spacing:-0.3px;color:#2f8a9a">0%</div>
<div class="a" style="left:1427.5px;top:532.9px;width:15px;height:15px;border-radius:50%;background:#f46b5c"></div>
<div class="a" style="left:904px;top:550.3px;width:536px;height:19.6px;background:#2b2c38"></div>
<div class="t" style="left:910px;top:554.3px;font-size:13px;letter-spacing:-0.4px;color:#fff;-webkit-text-stroke:0.3px #fff">Phase-3b_CH450 to 830 North Side</div>
<div class="t" style="left:1269.0px;width:100px;text-align:right;top:554.3px;font-size:13px;letter-spacing:-0.3px;color:#fff;-webkit-text-stroke:0.3px #fff">0%</div>
<div class="t" style="left:1322px;width:100px;text-align:right;top:554.3px;font-size:13px;letter-spacing:-0.3px;color:#2f8a9a">0%</div>
<div class="a" style="left:1427.5px;top:552.3px;width:15px;height:15px;border-radius:50%;background:#f46b5c"></div>
<div class="a" style="left:904px;top:569.7px;width:536px;height:19.6px;background:#1c1c26"></div>
<div class="t" style="left:910px;top:573.7px;font-size:13px;letter-spacing:-0.4px;color:#fff;-webkit-text-stroke:0.3px #fff">Phase-5_CH450</div>
<div class="t" style="left:1269.0px;width:100px;text-align:right;top:573.7px;font-size:13px;letter-spacing:-0.3px;color:#fff;-webkit-text-stroke:0.3px #fff">0%</div>
<div class="t" style="left:1322px;width:100px;text-align:right;top:573.7px;font-size:13px;letter-spacing:-0.3px;color:#2f8a9a">0%</div>
<div class="a" style="left:1427.5px;top:571.7px;width:15px;height:15px;border-radius:50%;background:#f46b5c"></div>
<div class="a" style="left:904px;top:589.1px;width:536px;height:19.6px;background:#2b2c38"></div>
<div class="t" style="left:910px;top:593.1px;font-size:13px;letter-spacing:-0.4px;color:#fff;-webkit-text-stroke:0.3px #fff">Site Investigation</div>
<div class="a" style="left:1120.4px;top:590.7px;width:34.5px;height:16px;background:#f3b33d"></div>
<div class="a" style="left:1120.4px;top:590.1px;width:0;height:17px;border-left:1px dotted #e8e8f0"></div>
<div class="t" style="left:1110.0px;width:100px;text-align:right;top:593.1px;font-size:13px;letter-spacing:-0.3px;color:#fff;-webkit-text-stroke:0.3px #fff">7.43%</div>
<div class="a" style="left:1221.8px;top:590.7px;width:8.8px;height:16px;background:#f3b33d"></div>
<div class="a" style="left:1221.8px;top:590.1px;width:0;height:17px;border-left:1px dotted #e8e8f0"></div>
<div class="t" style="left:1206.0px;width:100px;text-align:right;top:593.1px;font-size:13px;letter-spacing:-0.3px;color:#fff;-webkit-text-stroke:0.3px #fff">1.78%</div>
<div class="a" style="left:1318.3px;top:590.7px;width:44.4px;height:16px;background:#f3b33d"></div>
<div class="t" style="left:1269.0px;width:100px;text-align:right;top:593.1px;font-size:13px;letter-spacing:-0.3px;color:#fff;-webkit-text-stroke:0.3px #fff">7%</div>
<div class="t" style="left:1322px;width:100px;text-align:right;top:593.1px;font-size:13px;letter-spacing:-0.3px;color:#d9607a">-1%</div>
<div class="a" style="left:1427.5px;top:591.1px;width:15px;height:15px;border-radius:50%;background:#f46b5c"></div>
<div class="a" style="left:1318.3px;top:414.5px;width:0;height:194.0px;border-left:1px dotted #e8e8f0"></div>
<div class="a" style="left:904px;top:607.7px;width:536px;height:1.5px;background:#2f7fcf"></div>
<div class="t" style="left:910px;top:612.5px;font-size:13px;color:#fff;font-weight:bold">Total</div>
<div class="t" style="left:1110.0px;width:100px;text-align:right;top:612.5px;font-size:13px;letter-spacing:-0.3px;color:#fff;font-weight:bold">6.76%</div>
<div class="t" style="left:1206.0px;width:100px;text-align:right;top:612.5px;font-size:13px;letter-spacing:-0.3px;color:#fff;font-weight:bold">4.60%</div>
<div class="t" style="left:1269.0px;width:100px;text-align:right;top:612.5px;font-size:13px;letter-spacing:-0.3px;color:#fff;font-weight:bold">2%</div>
<div class="t" style="left:1322px;width:100px;text-align:right;top:612.5px;font-size:13px;letter-spacing:-0.3px;color:#e0607a;font-weight:bold">-4%</div>
<div class="a" style="left:1427.5px;top:610.5px;width:15px;height:15px;border-radius:50%;background:#f46b5c"></div>
<div class="a" style="left:904px;top:747.5px;width:535px;height:11px;border-radius:5.5px;background:#4b4c57;border:1.6px solid #9c9ca8"></div>
<div id="ls"></div><div id="bs"></div>
</div>
</body></html>
